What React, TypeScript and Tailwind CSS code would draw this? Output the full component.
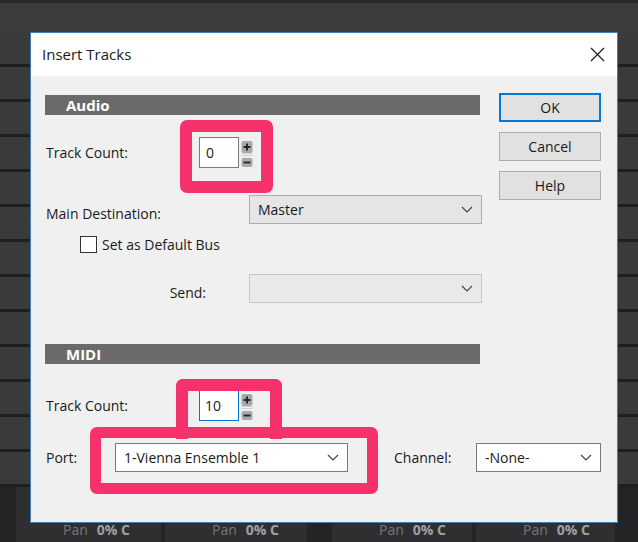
import React from 'react';

const FONT = { fontFamily: '"Segoe UI", "Open Sans", "Noto Sans", sans-serif' };

function Chevron() {
  return (
    <svg width="12" height="7" viewBox="0 0 12 7" className="shrink-0">
      <path d="M1 1l5 5 5-5" fill="none" stroke="#444" strokeWidth="1.2" />
    </svg>
  );
}

function Spinner() {
  return (
    <svg width="12" height="28" viewBox="0 0 12 28" className="ml-[2px] mt-[1px]">
      <rect x="0.5" y="2" width="11" height="12" rx="2" fill="#a9a9a9" />
      <path d="M6 4.5v7M2.5 8h7" stroke="#2a2a2a" strokeWidth="2" />
      <rect x="0.5" y="14" width="11" height="1" fill="#d0d0d0" />
      <rect x="0.5" y="16" width="11" height="1" fill="#d0d0d0" />
      <rect x="0.5" y="19" width="11" height="9" rx="2" fill="#a9a9a9" />
      <path d="M2.5 23.5h7" stroke="#2a2a2a" strokeWidth="2" />
    </svg>
  );
}

function SelectBox({ value, width, variant }: { value: string; width: string; variant: 'white' | 'gray' | 'disabled' }) {
  const cls =
    variant === 'white'
      ? 'bg-white border-[#7a7a7a]'
      : variant === 'gray'
      ? 'bg-[#e5e5e5] border-[#adadad]'
      : 'bg-[#e9e9e9] border-[#c6c6c6]';
  return (
    <div className={`${width} h-[29px] border ${cls} flex items-center justify-between pl-[8px] pr-[8px] text-[14px] text-[#1a1a1a]`}>
      <span>{value}</span>
      <Chevron />
    </div>
  );
}

function Button({ label, primary }: { label: string; primary?: boolean }) {
  return (
    <div
      className={`w-[102px] h-[29px] flex items-center justify-center bg-[#e1e1e1] text-[14px] text-[#1a1a1a] ${
        primary ? 'border-2 border-[#0078d7]' : 'border border-[#adadad]'
      }`}
    >
      {label}
    </div>
  );
}

function SectionBar({ title }: { title: string }) {
  return (
    <div className="w-[435px] h-[20px] bg-[#6a6a6a] flex items-center pl-[21px] text-white font-bold text-[15px] leading-none">
      {title}
    </div>
  );
}

const PAN_COLS = [
  { w: 'w-[145px]', gap: 'w-[4px]' },
  { w: 'w-[142px]', gap: 'w-[25px]' },
  { w: 'w-[140px]', gap: 'w-[4px]' },
  { w: 'w-[139px]', gap: 'w-[23px]' },
];

export default function App() {
  return (
    <div className="relative w-[638px] h-[542px] overflow-hidden bg-[#38383b]" style={FONT}>
      {/* DAW background */}
      <div className="absolute inset-0 flex flex-col">
        <div className="h-[3px] bg-[#2a2a2c]" />
        <div className="h-[29px] bg-[#3c3c3f]" />
        {Array.from({ length: 13 }).map((_, i) => (
          <div key={i} className="h-[35px] bg-[#3a3a3d] border-b-[3px] border-[#1f1f21]" />
        ))}
        <div className="flex flex-1 bg-[#242426]">
          <div className="w-[16px]" />
          {PAN_COLS.map((c, i) => (
            <React.Fragment key={i}>
              <div className={`${c.w} bg-[#2f2f31] flex items-end pb-[2px] pl-[47px] gap-[9px] text-[14px]`}>
                <span className="text-[#77777a]">Pan</span>
                <span className="text-[#a0a0a2] font-bold">0% C</span>
              </div>
              <div className={`${c.gap}`} />
            </React.Fragment>
          ))}
        </div>
      </div>

      {/* Dialog window */}
      <div className="absolute left-[30px] top-[32px] w-[588px] h-[491px] border border-[#3f7fb8] bg-[#f0f0f0] flex flex-col">
        <div className="h-[43px] bg-white flex items-center justify-between pl-[11px] pr-[12px]">
          <span className="text-[15px] text-[#1a1a1a]">Insert Tracks</span>
          <svg width="15" height="15" viewBox="0 0 15 15">
            <path d="M1 1l13 13M14 1L1 14" stroke="#222" strokeWidth="1.3" />
          </svg>
        </div>

        <div className="flex-1 flex flex-col pl-[14px] pt-[17px] text-[14px] text-[#1a1a1a]">
          <div className="flex">
            <div className="w-[437px] flex flex-col mt-[2px]">
              <SectionBar title="Audio" />

              <div className="flex items-center h-[31px] mt-[22px]">
                <span className="w-[154px] pl-[1px]">Track Count:</span>
                <div className="w-[40px] h-[31px] bg-white border border-[#7a7a7a] flex items-center pl-[6px]">0</div>
                <Spinner />
              </div>

              <div className="flex items-center h-[29px] mt-[27px]">
                <span className="w-[204px] pl-[1px] pt-[7px]">Main Destination:</span>
                <SelectBox value="Master" width="w-[233px]" variant="gray" />
              </div>

              <div className="flex items-center h-[18px] mt-[11px] pl-[35px]">
                <div className="w-[17px] h-[17px] bg-white border border-[#333]" />
                <span className="ml-[5px]">Set as Default Bus</span>
              </div>

              <div className="flex items-center h-[29px] mt-[21px]">
                <span className="w-[204px] pr-[43px] text-right pt-[8px]">Send:</span>
                <SelectBox value="" width="w-[233px]" variant="disabled" />
              </div>

              <div className="mt-[41px]">
                <SectionBar title="MIDI" />
              </div>

              <div className="flex items-center h-[31px] mt-[26px]">
                <span className="w-[154px] pl-[1px]">Track Count:</span>
                <div className="w-[40px] h-[31px] bg-white border border-[#0078d7] flex items-center pl-[5px]">10</div>
                <Spinner />
              </div>
            </div>

            <div className="ml-[17px] flex flex-col gap-[10px]">
              <Button label="OK" primary />
              <Button label="Cancel" />
              <Button label="Help" />
            </div>
          </div>

          <div className="flex items-center h-[29px] mt-[22px]">
            <span className="w-[70px] pl-[1px]">Port:</span>
            <SelectBox value="1-Vienna Ensemble 1" width="w-[233px]" variant="white" />
            <span className="ml-[46px] w-[82px]">Channel:</span>
            <SelectBox value="-None-" width="w-[125px]" variant="white" />
          </div>
        </div>
      </div>

      {/* Highlight annotations */}
      <div className="absolute left-[180px] top-[120px] w-[93px] h-[73px] border-[12px] border-[#f5326c] rounded-[7px]" />
      <div className="absolute left-[176px] top-[379px] w-[106px] h-[60px] border-[12px] border-b-0 border-[#f5326c] rounded-t-[7px]" />
      <div className="absolute left-[90px] top-[427px] w-[288px] h-[67px] border-[11px] border-[#f5326c] rounded-[7px]" />
    </div>
  );
}
